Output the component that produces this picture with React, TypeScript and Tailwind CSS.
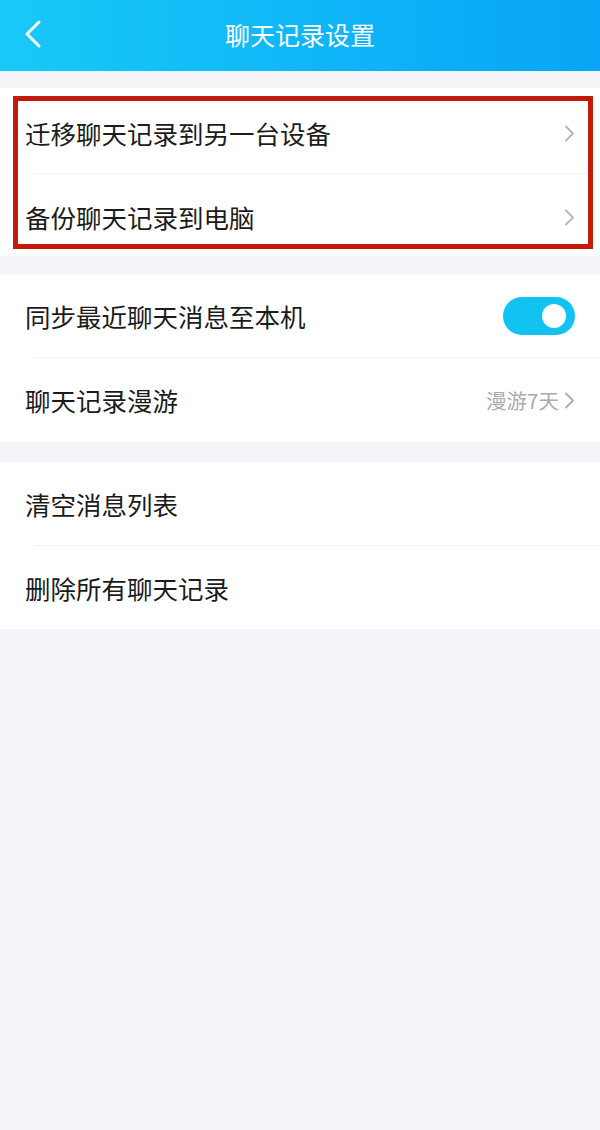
import React from "react";

function Chevron({ className = "" }: { className?: string }) {
  return (
    <svg width="11" height="17" viewBox="0 0 11 17" className={className}>
      <path d="M2 1.5 L9 8.5 L2 15.5" fill="none" stroke="currentColor" strokeWidth="1.8" strokeLinecap="round" strokeLinejoin="round" />
    </svg>
  );
}

function Row({ label, right, h }: { label: string; right?: React.ReactNode; h: string }) {
  return (
    <div className={`flex items-center justify-between pl-[25px] pr-[25px] ${h}`}>
      <span className="text-[25.5px] text-[#1b1b1b] leading-none">{label}</span>
      {right}
    </div>
  );
}

function Toggle() {
  return (
    <div className="w-[72px] h-[38px] rounded-full bg-[#12c3f1] flex items-center justify-end pr-[9px]">
      <div className="w-[24px] h-[24px] rounded-full bg-white" />
    </div>
  );
}

export default function App() {
  return (
    <div
      className="w-[600px] min-h-[1130px] bg-[#f5f5f9]"
      style={{ fontFamily: '"Noto Sans CJK SC", "Noto Sans", sans-serif' }}
    >
      {/* header */}
      <header className="h-[71px] bg-gradient-to-r from-[#19c9f8] to-[#09a5f6] flex items-center relative">
        <svg width="18" height="30" viewBox="0 0 18 30" className="absolute left-[24px] top-[19px] text-white">
          <path d="M15 3 L3 15 L15 27" fill="none" stroke="currentColor" strokeWidth="3" strokeLinecap="round" strokeLinejoin="round" />
        </svg>
        <h1 className="w-full text-center text-white text-[25px] leading-none pb-[2px]">聊天记录设置</h1>
      </header>

      <div className="h-[17px]" />

      {/* migrate / backup */}
      <section className="bg-white pt-[8px] pb-[7px]">
        <div className="ml-[13px] mr-[7px] border-[5px] border-[#c4190d]">
          <div className="flex items-center justify-between pl-[7px] pr-[13px] h-[72px] pb-[8px]">
            <span className="text-[25.5px] text-[#1b1b1b] leading-none">迁移聊天记录到另一台设备</span>
            <Chevron className="text-[#b5b5b5]" />
          </div>
          <div className="ml-[17px] h-px bg-[#f1f1f3]" />
          <div className="flex items-center justify-between pl-[7px] pr-[13px] h-[70px] pt-[16px]">
            <span className="text-[25.5px] text-[#1b1b1b] leading-none">备份聊天记录到电脑</span>
            <Chevron className="text-[#b5b5b5]" />
          </div>
        </div>
      </section>

      <div className="h-[18px]" />

      <section className="bg-white">
        <Row label="同步最近聊天消息至本机" h="h-[83px]" right={<Toggle />} />
        <div className="ml-[35px] h-px bg-[#f1f1f3]" />
        <Row
          label="聊天记录漫游"
          h="h-[84px]"
          right={
            <div className="flex items-center gap-[5px] text-[#acacac]">
              <span className="text-[20.5px] leading-none">漫游7天</span>
              <Chevron />
            </div>
          }
        />
      </section>

      <div className="h-[20px]" />

      <section className="bg-white">
        <Row label="清空消息列表" h="h-[83px]" />
        <div className="ml-[35px] h-px bg-[#f1f1f3]" />
        <Row label="删除所有聊天记录" h="h-[83px]" />
      </section>
    </div>
  );
}
